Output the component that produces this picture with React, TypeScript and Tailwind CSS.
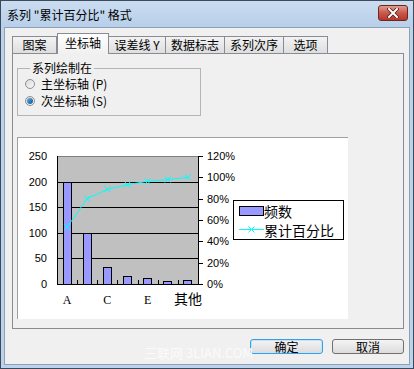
const ui = "font-['Noto_Sans_CJK_SC',sans-serif]";

const tabs = [
  { label: "图案", w: "w-[45px]", active: false },
  { label: "坐标轴", w: "w-[52px]", active: true },
  { label: "误差线 Y", w: "w-[58px]", active: false },
  { label: "数据标志", w: "w-[60px]", active: false },
  { label: "系列次序", w: "w-[60px]", active: false },
  { label: "选项", w: "w-[45px]", active: false },
];

const bars = [200, 100, 33, 16, 12, 6, 8];
const pct = [53.3, 80, 88.8, 93.1, 96.3, 97.9, 100];
const cw = 141 / 7;
const cx = (i: number) => 39 + cw * (i + 0.5);
const yL = (v: number) => 146 - (v * 128) / 250;
const yR = (p: number) => 146 - (p * 128) / 120;

function Cross({ x, y }: { x: number; y: number }) {
  return (
    <g stroke="#00ffff" strokeWidth={1}>
      <line x1={x - 3} y1={y - 3} x2={x + 3} y2={y + 3} />
      <line x1={x - 3} y1={y + 3} x2={x + 3} y2={y - 3} />
    </g>
  );
}

function Chart() {
  const sans = "Liberation Sans, Arial, sans-serif";
  const cjk = "Noto Sans CJK SC, sans-serif";
  return (
    <svg width={330} height={181} viewBox="0 0 330 181">
      <rect x={39} y={18} width={141} height={128} fill="#c0c0c0" />
      <line x1={39} y1={18.5} x2={181} y2={18.5} stroke="#808080" />
      {[200, 150, 100, 50].map((v) => (
        <line key={v} x1={39} x2={181} y1={Math.round(yL(v)) + 0.5} y2={Math.round(yL(v)) + 0.5} stroke="#000" />
      ))}
      {bars.map((v, i) => (
        <rect
          key={i}
          x={Math.round(cx(i) - 4.5) + 0.5}
          y={Math.round(yL(v)) + 0.5}
          width={8}
          height={146 - Math.round(yL(v))}
          fill="#9999ff"
          stroke="#000"
        />
      ))}
      {[1, 2, 3, 4, 5, 6].map((k) => (
        <line key={k} x1={Math.round(39 + cw * k) + 0.5} x2={Math.round(39 + cw * k) + 0.5} y1={142} y2={146} stroke="#000" />
      ))}
      <line x1={39.5} y1={18} x2={39.5} y2={147} stroke="#000" />
      <line x1={39} y1={146.5} x2={181} y2={146.5} stroke="#000" />
      <line x1={180.5} y1={18} x2={180.5} y2={147} stroke="#000" />
      {[0, 20, 40, 60, 80, 100, 120].map((p) => (
        <line key={p} x1={180} x2={185} y1={Math.round(yR(p)) + 0.5} y2={Math.round(yR(p)) + 0.5} stroke="#000" />
      ))}
      {[250, 200, 150, 100, 50, 0].map((v) => (
        <text key={v} x={29} y={yL(v) + 4} textAnchor="end" fontSize={11} fontFamily={sans} fill="#000">
          {v}
        </text>
      ))}
      {[120, 100, 80, 60, 40, 20, 0].map((p) => (
        <text key={p} x={189} y={yR(p) + 4} fontSize={11} fontFamily={sans} fill="#000">
          {p}%
        </text>
      ))}
      <polyline
        points={pct.map((p, i) => `${cx(i)},${yR(p)}`).join(" ")}
        fill="none"
        stroke="#00ffff"
        strokeWidth={1}
      />
      {pct.map((p, i) => (
        <Cross key={i} x={cx(i)} y={yR(p)} />
      ))}
      {[
        ["A", 0],
        ["C", 2],
        ["E", 4],
      ].map(([t, i]) => (
        <text key={t} x={cx(i as number)} y={166} textAnchor="middle" fontSize={12} fontFamily="Liberation Serif, serif" fill="#000">
          {t}
        </text>
      ))}
      <text x={cx(6)} y={166} textAnchor="middle" fontSize={14} fontFamily={cjk} fill="#000">
        其他
      </text>

      <rect x={215.5} y={62.5} width={110} height={39} fill="#fff" stroke="#000" />
      <rect x={221.5} y={68.5} width={24} height={9} fill="#9999ff" stroke="#000" />
      <text x={246} y={79} fontSize={14} fontFamily={cjk} fill="#000">
        频数
      </text>
      <line x1={221} x2={246} y1={91.5} y2={91.5} stroke="#00ffff" />
      <Cross x={233.5} y={91.5} />
      <text x={246} y={98} fontSize={14} fontFamily={cjk} fill="#000">
        累计百分比
      </text>
    </svg>
  );
}

function Radio({ checked, label }: { checked: boolean; label: string }) {
  return (
    <div className="flex items-center h-[17px] gap-[6px]">
      <div className="w-[10px] h-[10px] rounded-full border border-[#8e8f8f] bg-gradient-to-br from-[#d8d8d8] to-[#fbfbfb] flex items-center justify-center">
        {checked && <div className="w-[6px] h-[6px] rounded-full bg-gradient-to-br from-[#5fb3ea] to-[#0f4f8f]" />}
      </div>
      <span className="text-[12px] leading-[14px] text-black">{label}</span>
    </div>
  );
}

export default function App() {
  return (
    <div className={`relative w-[414px] h-[369px] border border-[#3c4a5c] bg-[#bcd3ec] flex flex-col ${ui}`}>
      {/* title bar */}
      <div className="h-[26px] flex items-start justify-between pl-[6px] pr-[5px] bg-gradient-to-b from-[#cadcf0] to-[#b8cfea]">
        <span className="text-[12px] leading-[14px] mt-[7px] text-black">系列 "累计百分比" 格式</span>
        <div className="mt-[4px] w-[30px] h-[16px] rounded-[3px] border border-[#6b2620] bg-gradient-to-b from-[#e39a8d] via-[#c9584b] to-[#b8352a] flex items-center justify-center">
          <svg width={12} height={10} viewBox="0 0 12 10">
            <path d="M2 1 L10 9 M10 1 L2 9" stroke="#4a1a16" strokeWidth={3.5} strokeLinecap="square" />
            <path d="M2 1 L10 9 M10 1 L2 9" stroke="#fff" strokeWidth={2} strokeLinecap="square" />
          </svg>
        </div>
      </div>

      {/* client */}
      <div className="flex-1 mx-[3px] mb-[3px] bg-[#f0f0f0] border border-[#8ea0b6] flex flex-col">
        <div className="flex items-end h-[21px] mt-[5px] ml-[7px]">
          {tabs.map((t) =>
            t.active ? (
              <div
                key={t.label}
                className={`${t.w} h-[21px] relative z-10 border border-b-0 border-[#898c95] bg-gradient-to-b from-[#ffffff] to-[#f0f0f0] flex items-center justify-center text-[12px] leading-[14px] pb-[2px]`}
              >
                {t.label}
              </div>
            ) : (
              <div
                key={t.label}
                className={`${t.w} h-[17px] mb-px border border-b-0 border-[#898c95] -ml-px first:ml-0 bg-gradient-to-b from-[#f3f3f3] to-[#dedede] flex items-center justify-center text-[12px] leading-[14px]`}
              >
                {t.label}
              </div>
            )
          )}
        </div>

        <div className="-mt-px ml-[7px] mr-[5px] h-[276px] border border-[#898c95] bg-[#f0f0f0] flex flex-col">
          <fieldset className="ml-[4px] mt-[7px] w-[184px] h-[55px] border border-[#b5b5b5] pl-[7px]">
            <legend className="ml-[5px] px-[2px] text-[12px] leading-[14px]">系列绘制在</legend>
            <Radio checked={false} label="主坐标轴 (P)" />
            <Radio checked label="次坐标轴 (S)" />
          </fieldset>

          <div className="ml-[4px] mt-[21px] w-[331px] h-[182px] bg-white border-t border-l border-[#a0a0a0]">
            <Chart />
          </div>
        </div>

        <div className="flex justify-end gap-[9px] mt-[10px] mr-[5px]">
          <button className="w-[73px] h-[15px] rounded-[3px] border border-[#3a9ee0] bg-gradient-to-b from-[#f4f4f4] to-[#dcdcdc] text-[12px] leading-[13px] shadow-[inset_0_0_0_1px_#bfe6fb]">
            确定
          </button>
          <button className="w-[72px] h-[15px] rounded-[3px] border border-[#707070] bg-gradient-to-b from-[#f4f4f4] to-[#dcdcdc] text-[12px] leading-[13px]">
            取消
          </button>
        </div>
      </div>

      {/* watermark */}
      <span className="absolute left-[143px] top-[345px] text-[13px] leading-[14px] text-[#fbfbfb] pointer-events-none">
        三联网 3LIAN.COM
      </span>
    </div>
  );
}
